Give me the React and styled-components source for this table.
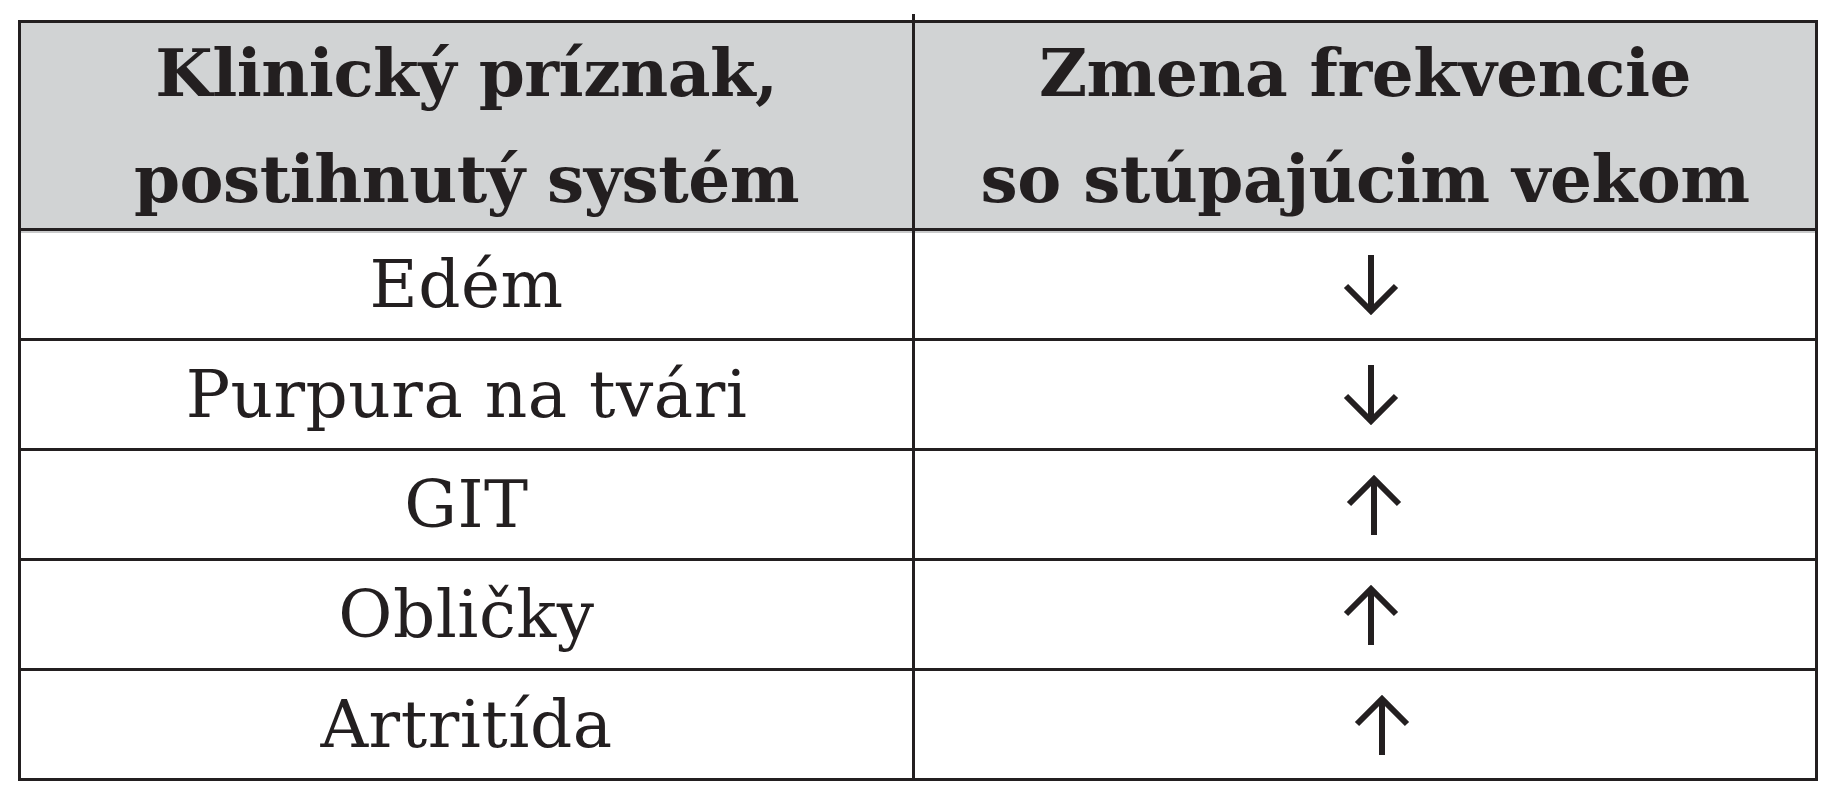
import React from 'react';
import styled, { createGlobalStyle } from 'styled-components';

const GlobalStyle = createGlobalStyle`
  html, body {
    margin: 0;
    padding: 0;
    background: #fff;
  }
`;

const Page = styled.div`
  padding: 20px 0 0 18px;
`;

// dark background shows through the gaps and acts as the table rules
const Table = styled.div`
  display: grid;
  grid-template-columns: 891px 900px;
  grid-template-rows: 205px repeat(5, 107px);
  gap: 3px;
  padding: 3px;
  width: max-content;
  background: #231f20;
  font-family: 'DejaVu Serif', 'Liberation Serif', serif;
  color: #231f20;
`;

const HeadCell = styled.div`
  position: relative;
  background: #d1d3d4;
  display: flex;
  align-items: center;
  justify-content: center;
  text-align: center;
  font-weight: 700;
  font-size: 66px;
  line-height: 106px;
  letter-spacing: -0.5px;

  /* the column rule pokes a little above the top border */
  &:nth-child(2)::before {
    content: '';
    position: absolute;
    top: -9px;
    left: -3px;
    width: 3px;
    height: 9px;
    background: #231f20;
  }
`;

const Cell = styled.div`
  background: #fff;
  display: flex;
  align-items: center;
  justify-content: center;
  font-size: 66px;
  letter-spacing: 0.5px;
  padding-left: ${(p) => p.$shift || 0}px;
  box-shadow: ${(p) => (p.$first ? 'inset 0 2px 0 #c9cacb' : 'none')};
`;

const Arrow = ({ dir }) => (
  <svg width="58" height="60" viewBox="0 0 58 60" fill="none" stroke="#231f20" strokeWidth="6">
    {dir === 'down' ? (
      <>
        <path d="M29 0V56" />
        <path d="M4 31L29 56L54 31" />
      </>
    ) : (
      <>
        <path d="M29 60V4" />
        <path d="M4 29L29 4L54 29" />
      </>
    )}
  </svg>
);

const rows = [
  { name: 'Edém', dir: 'down', shift: 12 },
  { name: 'Purpura na tvári', dir: 'down', shift: 12 },
  { name: 'GIT', dir: 'up', shift: 18 },
  { name: 'Obličky', dir: 'up', shift: 12 },
  { name: 'Artritída', dir: 'up', shift: 34 },
];

export default function App() {
  return (
    <Page>
      <GlobalStyle />
      <Table>
        <HeadCell>
          Klinický príznak,
          <br />
          postihnutý systém
        </HeadCell>
        <HeadCell>
          Zmena frekvencie
          <br />
          so stúpajúcim vekom
        </HeadCell>
        {rows.map((r, i) => (
          <React.Fragment key={r.name}>
            <Cell $first={i === 0}>{r.name}</Cell>
            <Cell $first={i === 0} $shift={r.shift}>
              <Arrow dir={r.dir} />
            </Cell>
          </React.Fragment>
        ))}
      </Table>
    </Page>
  );
}
